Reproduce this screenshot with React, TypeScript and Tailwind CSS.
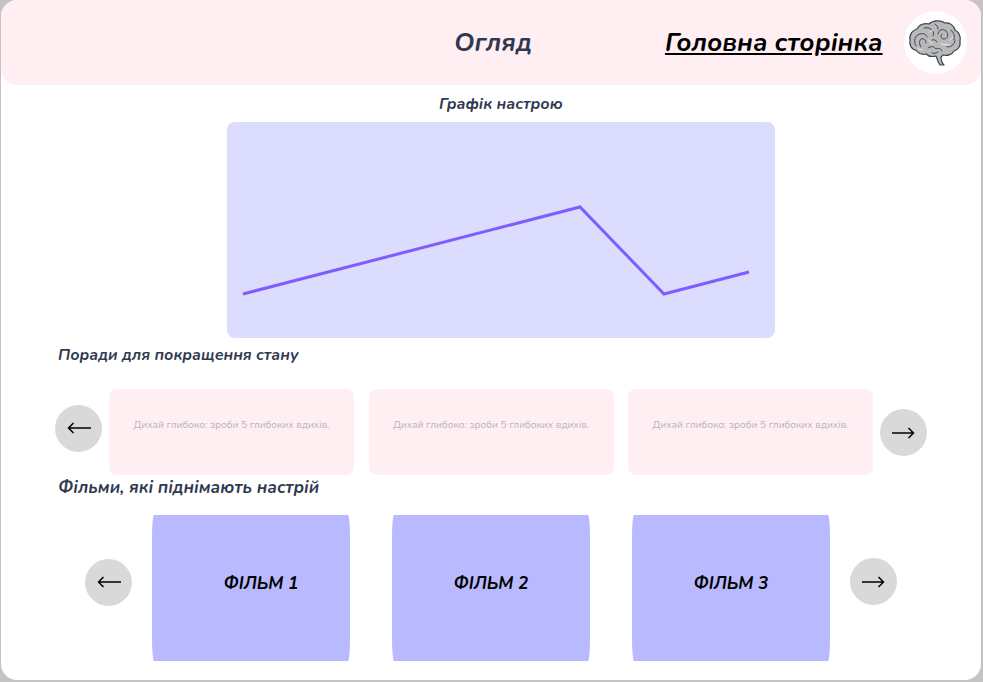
const font = "font-['Nunito','Noto_Sans','Open_Sans',sans-serif]"

function ArrowButton({ dir, className }: { dir: 'left' | 'right'; className: string }) {
  return (
    <button className={`flex h-[47px] w-[47px] shrink-0 items-center justify-center rounded-full bg-[#d9d9d9] ${className}`}>
      <svg width="24" height="12" viewBox="0 0 24 12" fill="none" stroke="#000" strokeWidth="1.5">
        {dir === 'left' ? <path d="M24 6H1.5M6.5 1 1.5 6l5 5" /> : <path d="M-1 6h22.5M16.5 1l5 5-5 5" />}
      </svg>
    </button>
  )
}

function Brain() {
  return (
    <svg width="60" height="60" viewBox="0 0 60 60" fill="none" strokeLinecap="round" strokeLinejoin="round">
      <path
        d="M5 27C4 21 8 17 12 16 14 11 20 10 24 11 28 7 36 7 40 10 45 9 49 13 50 17 54 19 56 24 55 28 56 33 53 37 49 38 47 42 42 43 38 42L36 44C36 47 37 50 39 52L35 52C33 49 32 46 31 43 27 44 23 43 21 41 17 42 13 40 11 37 7 37 4 32 5 27Z"
        fill="#b9b9b9"
        stroke="#3c4657"
        strokeWidth="1.2"
      />
      <g stroke="#3c4657" strokeWidth="1">
        <path d="M11 33c-3-5-1-11 4-12 3-1 6 0 7 3" />
        <path d="M16 34c-2-3-2-6 0-8 3-1 5 1 5 4" />
        <path d="M19 15c3-1 6 0 8 2 2 2 2 4 1 6" />
        <path d="M33 21c0-4 5-6 8-3s2 8-2 8c-3 0-4-3-2-5" />
        <path d="M30 11c2 1 3 3 3 5M46 17c3 3 4 6 3 10M50 28c-1 4-4 6-8 6" />
        <path d="M23 35c3-2 6-2 8 1 2-1 5-1 6 2M27 40c2 1 4 0 6-1" />
        <path d="M27 27c2-1 4 0 5 2" />
      </g>
      <g stroke="#f2f2f2" strokeWidth="0.9">
        <path d="M36 31l9 1M45 27l3-3M24 27l3 4M13 36l4 1M25 19l3-2" />
      </g>
    </svg>
  )
}

export default function App() {
  const tips = [1, 2, 3]
  const films = [
    { title: 'ФІЛЬМ 1', pad: 'pl-[20px]' },
    { title: 'ФІЛЬМ 2', pad: '' },
    { title: 'ФІЛЬМ 3', pad: '' },
  ]

  return (
    <div className={`h-[682px] w-[983px] overflow-hidden bg-[#c4c4c4] pl-px ${font}`}>
      <div className="h-[680px] w-[980px] overflow-hidden rounded-2xl bg-white">
        {/* Header */}
        <header className="flex h-[85px] items-center rounded-2xl bg-[#ffeff3] pl-[453px]">
          <h1 className="text-[26px] font-bold italic leading-none text-[#2f3a50]">Огляд</h1>
          <a className="ml-[133px] text-[26px] font-bold italic leading-none text-black underline">Головна сторінка</a>
          <div className="ml-[21px] flex h-[63px] w-[63px] items-center justify-center rounded-full bg-white">
            <Brain />
          </div>
        </header>

        {/* Mood chart */}
        <h2 className="ml-[438px] mt-[10px] text-base font-bold italic leading-[18px] text-[#2f3a50]">Графік настрою</h2>
        <div className="ml-[226px] mt-[9px] h-[216px] w-[548px] rounded-lg bg-[#dcdcff]">
          <svg width="548" height="216" viewBox="0 0 548 216" fill="none">
            <polyline points="16,172 353,85 437,172 522,150" stroke="#7f5cff" strokeWidth="3" />
          </svg>
        </div>

        {/* Tips */}
        <h2 className="ml-[57px] mt-2 text-[15.9px] font-bold italic leading-[18px] text-[#2f3a50]">Поради для покращення стану</h2>
        <div className="ml-[54px] mt-[25px] flex h-[86px] items-center">
          <ArrowButton dir="left" className="mb-[8px] mr-[7px]" />
          <div className="flex gap-[14.5px]">
            {tips.map((t) => (
              <div key={t} className="flex h-[86px] w-[245px] justify-center rounded-lg bg-[#ffeff3] pt-[29px]">
                <p className="text-[10.15px] leading-[14px] text-[#b5b4c0]">Дихай глибоко: зроби 5 глибоких вдихів.</p>
              </div>
            ))}
          </div>
          <ArrowButton dir="right" className="ml-[7px] mt-[1px]" />
        </div>

        {/* Films */}
        <h2 className="ml-[57px] mt-[4px] text-[17.3px] font-bold italic leading-[18px] text-[#2f3a50]">Фільми, які піднімають настрій</h2>
        <div className="ml-[84px] mt-[18px] flex h-[146px] items-center">
          <ArrowButton dir="left" className="mb-[12px] mr-[20px]" />
          <div className="flex gap-[42px]">
            {films.map((f) => (
              <div key={f.title} className={`flex h-[146px] w-[198px] items-center justify-center rounded-[2px/24px] bg-[#b9b9ff] pb-[8px] ${f.pad}`}>
                <span className="text-[17.3px] font-bold italic text-black">{f.title}</span>
              </div>
            ))}
          </div>
          <ArrowButton dir="right" className="mb-[13px] ml-[20px]" />
        </div>
      </div>
    </div>
  )
}
